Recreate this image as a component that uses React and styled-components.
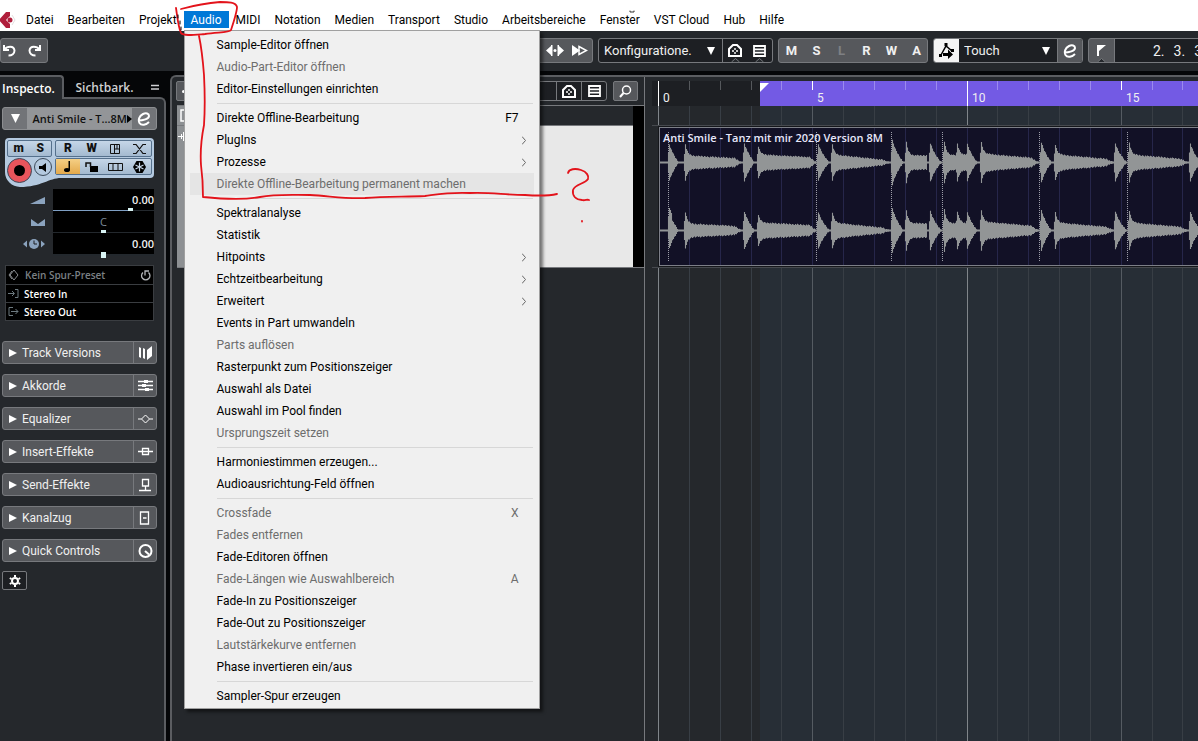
import { useLayoutEffect, useRef, useState } from "react";
import styled, { createGlobalStyle, css } from "styled-components";

const GlobalStyle = createGlobalStyle`
  * {
    box-sizing: border-box;
  }
  html, body, #root {
    height: 100%;
  }
  body {
    margin: 0;
    background: #25282c;
    overflow: hidden;
    font-family: Roboto, "Open Sans", sans-serif;
    font-size: 12px;
  }
  button, input, select {
    font: inherit;
    color: inherit;
    margin: 0;
    padding: 0;
    border: 0;
    background: none;
  }
  ul {
    list-style: none;
    margin: 0;
    padding: 0;
  }
`;

const line = "#77797d";

const strong = css`
  font-family: "Open Sans", sans-serif;
  font-weight: 600;
`;

const App = () => (
  <>
    <GlobalStyle />
    <Page>
      <MenuBar />
      <Toolbar />
      <Workspace>
        <Inspector />
        <Project>
          <TrackList />
          <Timeline />
        </Project>
      </Workspace>
      <Marker />
    </Page>
  </>
);

const Page = styled.div`
  position: relative;
  display: flex;
  flex-direction: column;
  min-height: 100%;
  overflow: hidden;
`;

const Workspace = styled.main`
  flex: 1;
  display: flex;
  align-items: stretch;
  background: #050608;
  padding-top: 4px;
`;

/* ---------- menu bar ---------- */

const Bar = styled.nav`
  display: flex;
  align-items: center;
  height: 31px;
  padding-top: 8px;
  background: #fff;
  color: #000;
  ul {
    display: flex;
  }
`;

const Logo = styled.svg`
  width: 19px;
  height: 18px;
  flex: none;
`;

const MenuEntry = styled.li`
  position: relative;
  z-index: 5;
`;

const MenuButton = styled.button`
  display: block;
  height: 17px;
  padding: 2px 7px 0;
  line-height: 15px;
  white-space: nowrap;
  background: ${(p) => (p.$open ? "#0078d7" : "none")};
  color: ${(p) => (p.$open ? "#fff" : "#000")};
`;

const Dropdown = styled.ul`
  position: absolute;
  top: 19px;
  left: 0;
  width: 356px;
  flex-direction: column;
  padding: 3px 5px 1px;
  background: #f0f0f0;
  border: 1px solid #a0a0a0;
  box-shadow: 3px 3px 3px rgba(0, 0, 0, 0.5);
`;

const DropItem = styled.button`
  display: flex;
  align-items: center;
  width: 100%;
  height: 22px;
  padding: 0 8px 0 27px;
  text-align: left;
  color: ${(p) => (p.disabled ? "#6d6d6d" : "#000")};
  background: ${(p) => (p.$hot ? "#e5e5e5" : "none")};
  span {
    flex: 1;
    white-space: nowrap;
  }
  kbd {
    font: inherit;
    margin-right: 7px;
  }
`;

const Separator = styled.li`
  height: 1px;
  margin: 3px 1px 3px 27px;
  background: #d7d7d7;
`;

const menuNames = [
  "Datei",
  "Bearbeiten",
  "Projekt",
  "Audio",
  "MIDI",
  "Notation",
  "Medien",
  "Transport",
  "Studio",
  "Arbeitsbereiche",
  "Fenster",
  "VST Cloud",
  "Hub",
  "Hilfe",
];

const audioMenu = [
  { label: "Sample-Editor öffnen" },
  { label: "Audio-Part-Editor öffnen", off: true },
  { label: "Editor-Einstellungen einrichten" },
  null,
  { label: "Direkte Offline-Bearbeitung", keys: "F7" },
  { label: "PlugIns", sub: true },
  { label: "Prozesse", sub: true },
  { label: "Direkte Offline-Bearbeitung permanent machen", off: true, hot: true },
  null,
  { label: "Spektralanalyse" },
  { label: "Statistik" },
  { label: "Hitpoints", sub: true },
  { label: "Echtzeitbearbeitung", sub: true },
  { label: "Erweitert", sub: true },
  { label: "Events in Part umwandeln" },
  { label: "Parts auflösen", off: true },
  { label: "Rasterpunkt zum Positionszeiger" },
  { label: "Auswahl als Datei" },
  { label: "Auswahl im Pool finden" },
  { label: "Ursprungszeit setzen", off: true },
  null,
  { label: "Harmoniestimmen erzeugen..." },
  { label: "Audioausrichtung-Feld öffnen" },
  null,
  { label: "Crossfade", off: true, keys: "X" },
  { label: "Fades entfernen", off: true },
  { label: "Fade-Editoren öffnen" },
  { label: "Fade-Längen wie Auswahlbereich", off: true, keys: "A" },
  { label: "Fade-In zu Positionszeiger" },
  { label: "Fade-Out zu Positionszeiger" },
  { label: "Lautstärkekurve entfernen", off: true },
  { label: "Phase invertieren ein/aus" },
  null,
  { label: "Sampler-Spur erzeugen" },
];

const MenuBar = () => {
  const [open, setOpen] = useState("Audio");
  return (
    <Bar>
      <Logo viewBox="0 0 19 18">
        <path d="M-1 9 L6 1 L10 1 L10 5 L6 9 L10 13 L10 17 L6 17 Z" fill="#b01f3c" />
        <circle cx="10" cy="9" r="2.5" fill="#b01f3c" />
        <path d="M12 4 L15 9 L12 14" fill="none" stroke="#e3dfe0" />
      </Logo>
      <ul>
        {menuNames.map((name) => (
          <MenuEntry key={name}>
            <MenuButton
              $open={open === name}
              onClick={() => setOpen(open === name ? null : name)}
            >
              {name}
            </MenuButton>
            {name === "Audio" && open === name && (
              <Dropdown>
                {audioMenu.map((item, i) =>
                  item ? (
                    <li key={i}>
                      <DropItem disabled={item.off} $hot={item.hot}>
                        <span>{item.label}</span>
                        {item.keys && <kbd>{item.keys}</kbd>}
                        {item.sub && (
                          <svg width="4" height="9" viewBox="0 0 4 9">
                            <path d="M0 0.5 L3.5 4.5 L0 8.5" fill="none" stroke="#666" />
                          </svg>
                        )}
                      </DropItem>
                    </li>
                  ) : (
                    <Separator key={i} />
                  ),
                )}
              </Dropdown>
            )}
          </MenuEntry>
        ))}
      </ul>
    </Bar>
  );
};

/* ---------- toolbar ---------- */

const Tools = styled.header`
  display: flex;
  align-items: flex-start;
  gap: 5px;
  height: 40px;
  padding-top: 7px;
  background: #25282c;
  color: #f0f0f0;
  overflow: hidden;
`;

const Spacer = styled.div`
  flex: 0 0 ${(p) => p.$width}px;
`;

const Group = styled.div`
  display: flex;
  flex: 0 0 ${(p) => p.$width}px;
  justify-content: ${(p) => (p.$end ? "flex-end" : "flex-start")};
  height: ${(p) => p.$height || 25}px;
  border: 1px solid ${line};
  border-radius: 3px;
  background: ${(p) => (p.$dark ? "#1d1f23" : "#56585c")};
  overflow: hidden;
`;

const tones = {
  plain: css``,
  divided: css`
    border-left: 1px solid ${line};
  `,
  grey: css`
    background: #56585c;
    border-left: 1px solid ${line};
  `,
  light: css`
    background: #f4f4f4;
    color: #000;
  `,
};

const ToolButton = styled.button`
  display: flex;
  align-items: center;
  justify-content: center;
  flex: 0 0 25px;
  position: relative;
  font-size: 13px;
  font-weight: 700;
  color: ${(p) => (p.disabled ? "#7e8084" : "#f0f0f0")};
  ${(p) => tones[p.$tone || "plain"]}
`;

const Picker = styled.label`
  display: flex;
  align-items: center;
  flex: 1;
  padding: 0 7px 0 5px;
  select {
    flex: 1;
    min-width: 0;
    appearance: none;
    font-size: 13px;
    outline: none;
  }
  option {
    color: #000;
  }
`;

const Position = styled.output`
  display: flex;
  align-items: center;
  flex: 1;
  gap: 9px;
  padding-left: 38px;
  border-left: 1px solid ${line};
  background: #1d1f23;
  font-size: 14px;
  white-space: nowrap;
`;

const Down = ({ size = 8 }) => (
  <svg width={size} height={size} viewBox="0 0 8 8" fill="#fff">
    <path d="M0 0 H8 L4 8 Z" />
  </svg>
);

const Notch = styled.svg`
  position: absolute;
  left: 8px;
  bottom: 0;
`;

const House = () => (
  <svg width="14" height="13" viewBox="0 0 14 13">
    <path d="M1 12 V5 L5 1 H9 L13 5 V12 Z" fill="none" stroke="#fff" strokeWidth="2" />
    <path d="M7 4 V6 M7 8 V10 M4 7 H6 M8 7 H10" stroke="#fff" strokeWidth="1.4" />
  </svg>
);

const Rack = () => (
  <svg width="13" height="12" viewBox="0 0 13 12" fill="none" stroke="#fff" strokeWidth="1.8">
    <path d="M1 1 H12 V11 H1 Z M1 4.3 H12 M1 7.6 H12" />
  </svg>
);

const Edit = ({ size = 14 }) => (
  <svg width={size} height={size} viewBox="0 0 14 14" fill="none" stroke="#fff" strokeWidth="2">
    <path d="M1 8.5 C6 8.5 12 7 12 4 C12 1.5 9 0.5 6 2 C2 4 1 8 2.5 11 C4.5 14 9 13 12 10" />
  </svg>
);

const NotchMark = () => (
  <Notch width="9" height="4" viewBox="0 0 9 4">
    <path d="M0.5 4 L4.5 0.5 L8.5 4" fill="#25282c" stroke={line} />
  </Notch>
);

const Toolbar = () => (
  <Tools>
    <Group $width={48} $end>
      <ToolButton aria-label="Rückgängig">
        <svg width="15" height="13" viewBox="0 0 15 13" fill="none" stroke="#fff" strokeWidth="2">
          <path d="M2 1 V6 H7" />
          <path d="M2.5 5.5 C5 2 12 1 12.5 6.5 C12.5 9.5 10 11.5 6.5 11.5" />
        </svg>
      </ToolButton>
      <ToolButton aria-label="Wiederherstellen">
        <svg width="15" height="13" viewBox="0 0 15 13" fill="none" stroke="#fff" strokeWidth="2">
          <path d="M13 1 V6 H8" />
          <path d="M12.5 5.5 C10 2 3 1 2.5 6.5 C2.5 9.5 5 11.5 8.5 11.5" />
        </svg>
      </ToolButton>
    </Group>
    <Spacer $width={433} />
    <Group $width={102} $end>
      <ToolButton aria-label="Zentrieren">
        <svg width="18" height="11" viewBox="0 0 18 11" fill="#fff">
          <path d="M0 5.5 L5 1 V10 Z M18 5.5 L13 1 V10 Z M5 0 H6.5 V11 H5 Z M11.5 0 H13 V11 H11.5 Z" />
          <circle cx="9" cy="5.5" r="1.5" />
        </svg>
      </ToolButton>
      <ToolButton aria-label="Vorwärts">
        <svg width="16" height="11" viewBox="0 0 16 11" fill="#fff">
          <path d="M0 0 L8 5.5 L0 11 Z" />
          <path d="M7 1.5 L14.5 5.5 L7 9.5 Z" fill="none" stroke="#fff" strokeWidth="1.5" />
        </svg>
      </ToolButton>
    </Group>
    <Group $width={175} $dark>
      <Picker>
        <select aria-label="Konfiguration">
          <option>Konfiguratione.</option>
        </select>
        <Down />
      </Picker>
      <ToolButton $tone="divided" aria-label="Zonen">
        <House />
        <NotchMark />
      </ToolButton>
      <ToolButton aria-label="Fensterlayout">
        <Rack />
        <NotchMark />
      </ToolButton>
    </Group>
    <Group $width={150}>
      {["M", "S", "L", "R", "W", "A"].map((t) => (
        <ToolButton key={t} disabled={t === "L"}>
          {t}
        </ToolButton>
      ))}
    </Group>
    <Group $width={150} $dark>
      <ToolButton $tone="light" aria-label="Automation">
        <svg width="16" height="16" viewBox="0 0 16 16">
          <path d="M2 12 L7 3 L13 8" fill="none" stroke="#000" strokeWidth="1.5" />
          <rect x="5.5" y="0" width="3" height="3" />
          <rect x="0" y="11" width="3" height="3" />
          <rect x="12" y="6" width="3" height="3" />
          <path d="M4 10 H9 V6.5 L14 11.5 L9 16 V13 H4 Z" />
        </svg>
      </ToolButton>
      <Picker>
        <select aria-label="Automationsmodus">
          <option>Touch</option>
        </select>
        <Down />
      </Picker>
      <ToolButton $tone="grey" aria-label="Automationsfeld">
        <Edit />
      </ToolButton>
    </Group>
    <Group $width={400}>
      <ToolButton aria-label="Locator">
        <svg width="9" height="11" viewBox="0 0 9 11" fill="#fff">
          <path d="M0 0 H9 L2 6 V11 H0 Z" />
        </svg>
        <NotchMark />
      </ToolButton>
      <Position>
        <span>2.</span>
        <span>3.</span>
        <span>3</span>
      </Position>
    </Group>
  </Tools>
);

/* ---------- inspector ---------- */

const edge = "#5b5d61";

const Side = styled.aside`
  display: flex;
  flex-direction: column;
  flex: 0 0 170px;
  padding-right: 4px;
  color: #f0f0f0;
`;

const Tabs = styled.div`
  display: flex;
  height: 24px;
  margin-bottom: -2px;
`;

const Tab = styled.button`
  position: relative;
  flex: 0 0 ${(p) => (p.$active ? 64 : 79)}px;
  text-align: ${(p) => (p.$active ? "left" : "center")};
  padding-left: 2px;
  white-space: nowrap;
  color: ${(p) => (p.$active ? "#fff" : "#cfd0d2")};
  ${strong}
  ${(p) =>
    p.$active &&
    css`
      background: #25282c;
      border-top: 2px solid ${edge};
      border-right: 2px solid ${edge};
      border-top-right-radius: 4px;
    `}
`;

const Panel = styled.div`
  flex: 1;
  padding: 8px 7px 0 2px;
  background: #25282c;
  border-top: 2px solid ${edge};
  border-right: 2px solid ${edge};
  border-top-right-radius: 6px;
`;

const TrackHead = styled.div`
  display: flex;
  height: 23px;
  border: 1px solid #8b8d90;
  border-radius: 3px;
  background: #939598;
  color: #111;
  overflow: hidden;
`;

const TrackName = styled.div`
  flex: 1;
  display: flex;
  align-items: center;
  justify-content: flex-end;
  font-size: 11px;
  white-space: nowrap;
  ${strong}
`;

const HeadButton = styled.button`
  display: flex;
  flex: 0 0 24px;
  align-items: center;
  justify-content: center;
  background: #727478;
`;

const Controls = styled.div`
  position: relative;
  display: grid;
  grid-template-columns: 45px 97px;
  grid-auto-rows: 17px;
  gap: 1px 3px;
  height: 50px;
  margin: 8px 0 0 3px;
  padding: 2px;
  color: #111;
`;

const ControlsShape = styled.svg`
  position: absolute;
  top: 0;
  left: 0;
`;

const Cells = styled.div`
  position: relative;
  display: grid;
  grid-template-columns: repeat(${(p) => p.$count}, 1fr);
  border: 1px solid #55708c;
  border-radius: 2px;
  background: linear-gradient(#c5d6e8, #a4bad0);
`;

const Cell = styled.button`
  display: flex;
  align-items: center;
  justify-content: center;
  font-size: 12px;
  font-weight: 900;
  line-height: 15px;
  background: ${(p) => (p.$lit ? "linear-gradient(#f5cf85, #e3a94b)" : "none")};
  & + & {
    border-left: ${(p) => (p.$rule ? "1px solid #55708c" : "0")};
  }
`;

const RoundPair = styled.div`
  position: relative;
  display: flex;
  align-items: flex-start;
  gap: 2px;
`;

const Round = styled.button`
  display: flex;
  align-items: center;
  justify-content: center;
  flex: none;
  width: ${(p) => p.$size}px;
  height: ${(p) => p.$size}px;
  border: 1px solid #3c4a5a;
  border-radius: 50%;
  background: ${(p) => p.$fill};
`;

const Faders = styled.div`
  display: grid;
  grid-template-columns: 1fr 101px;
  margin: 1px 3px 0 0;
`;

const FaderIcon = styled.div`
  display: flex;
  align-items: center;
  justify-content: flex-end;
  padding-right: 8px;
  height: 22px;
`;

const Fader = styled.label`
  display: flex;
  flex-direction: column;
  height: 22px;
  padding-top: 3px;
  background: #000;
  font-size: 11px;
  line-height: 16px;
  text-align: right;
  ${strong}
  span {
    height: 16px;
    ${(p) =>
      p.$center &&
      css`
        text-align: center;
        font-weight: 400;
        color: #7c8a99;
      `}
  }
  input {
    appearance: none;
    width: 100%;
    height: 6px;
    background: linear-gradient(#7f9fc4, #7f9fc4) 0 50% / ${(p) => p.$fill}% 2px no-repeat,
      linear-gradient(#23282d, #23282d) 0 50% / 100% 2px no-repeat;
  }
  input::-webkit-slider-thumb {
    appearance: none;
    width: 5px;
    height: 6px;
    background: #d8f3f3;
  }
`;

const Routing = styled.ul`
  margin: 10px 3px 0 3px;
  border: 1px solid #3a3d41;
  background: #000;
`;

const Route = styled.li`
  display: flex;
  align-items: center;
  gap: 5px;
  height: 18px;
  padding: 0 2px;
  font-size: 10px;
  color: ${(p) => (p.$dim ? "#7b8085" : "#fff")};
  ${strong}
  & + & {
    border-top: 1px solid #3a3d41;
  }
  span {
    flex: 1;
  }
`;

const Sections = styled.div`
  display: flex;
  flex-direction: column;
  gap: 10px;
  margin-top: 20px;
`;

const Section = styled.button`
  display: flex;
  align-items: center;
  height: 23px;
  padding-left: 6px;
  gap: 5px;
  border: 1px solid ${line};
  border-radius: 3px;
  background: #56585c;
  color: #f0f0f0;
  text-align: left;
  span {
    flex: 1;
    white-space: nowrap;
  }
`;

const SectionIcon = styled.i`
  display: flex;
  align-items: center;
  justify-content: center;
  width: 23px;
  height: 21px;
  border-left: 1px solid ${line};
`;

const SetupButton = styled.button`
  display: flex;
  align-items: center;
  justify-content: center;
  width: 25px;
  height: 19px;
  margin-top: 9px;
  border: 1px solid ${line};
  border-radius: 2px;
  background: #1d1f23;
`;

const sections = [
  {
    name: "Track Versions",
    icon: <path d="M1 1 L3 2 V12 L1 11 Z M5 2 L7 3 V13 L5 12 Z M9 4 L14 0 V10 L9 14 Z" fill="#fff" />,
  },
  {
    name: "Akkorde",
    icon: (
      <g stroke="#fff" strokeWidth="1.5" fill="#fff">
        <path d="M0 2.5 H15 M0 6.5 H15 M0 10.5 H15" />
        <path d="M6 2.5 H10 M4 6.5 H8 M7 10.5 H11" strokeWidth="3" />
      </g>
    ),
  },
  {
    name: "Equalizer",
    icon: <path d="M0 7 H3.5 M11.5 7 H15 M7.5 3 L11.5 7 L7.5 11 L3.5 7 Z" fill="none" stroke="#fff" />,
  },
  {
    name: "Insert-Effekte",
    icon: <path d="M0 6.5 H15 M4.5 3.5 H10.5 V9.5 H4.5 Z" fill="none" stroke="#fff" strokeWidth="1.3" />,
  },
  {
    name: "Send-Effekte",
    icon: <path d="M4.5 1.5 H10.5 V8 H4.5 Z M7.5 8 V12 M1 12.5 H13" fill="none" stroke="#fff" strokeWidth="1.3" />,
  },
  {
    name: "Kanalzug",
    icon: <path d="M2.5 1 H10.5 V13 H2.5 Z M5 7 H8.5" fill="none" stroke="#fff" strokeWidth="1.3" />,
  },
  {
    name: "Quick Controls",
    icon: (
      <g fill="none" stroke="#fff" strokeWidth="2">
        <circle cx="7.5" cy="7" r="6" />
        <path d="M7 7 L11 10.5" />
      </g>
    ),
  },
];

const Inspector = () => (
  <Side>
    <Tabs>
      <Tab $active>Inspecto.</Tab>
      <Tab>Sichtbark.</Tab>
      <svg width="23" height="24" viewBox="0 0 23 24" stroke="#cfd0d2" strokeWidth="1.5">
        <path d="M8 10.5 H16 M8 14 H16" />
      </svg>
    </Tabs>
    <Panel>
      <TrackHead>
        <HeadButton aria-label="Spurliste">
          <Down size={9} />
        </HeadButton>
        <TrackName>
          Anti Smile - T...8M
          <svg width="5" height="8" viewBox="0 0 5 8">
            <path d="M0 0 L5 4 L0 8 Z" />
          </svg>
        </TrackName>
        <HeadButton aria-label="Kanal bearbeiten">
          <Edit />
        </HeadButton>
      </TrackHead>
      <Controls>
        <ControlsShape width="149" height="50" viewBox="0 0 149 50">
          <path
            d="M4 0 H145 Q149 0 149 4 V36 Q149 40 145 40 H56 C44 40 36 49 15 49 A15 15 0 0 1 0 34 V4 Q0 0 4 0 Z"
            fill="#b4c9df"
          />
        </ControlsShape>
        <Cells $count={2}>
          <Cell $rule>m</Cell>
          <Cell $rule>S</Cell>
        </Cells>
        <Cells $count={4}>
          <Cell>R</Cell>
          <Cell>W</Cell>
          <Cell aria-label="Spuren">
            <svg width="10" height="10" viewBox="0 0 10 10" fill="none" stroke="#111">
              <path d="M0.5 0.5 H9.5 V9.5 H0.5 Z M4.5 0.5 V9.5 M4.5 5 H9.5 M7 0.5 V5" />
            </svg>
          </Cell>
          <Cell aria-label="Crossfade">
            <svg width="13" height="10" viewBox="0 0 13 10" fill="none" stroke="#111" strokeWidth="1.2">
              <path d="M0 0.5 H3 L10 9.5 H13 M0 9.5 H3 L10 0.5 H13" />
            </svg>
          </Cell>
        </Cells>
        <RoundPair>
          <Round $size={25} $fill="#e8555c" aria-label="Aufnahme">
            <svg width="11" height="11">
              <circle cx="5.5" cy="5.5" r="5.5" />
            </svg>
          </Round>
          <Round $size={18} $fill="#b4c9df" aria-label="Monitor">
            <svg width="8" height="9" viewBox="0 0 8 9">
              <path d="M0 3 H3 L7 0 V9 L3 6 H0 Z" />
            </svg>
          </Round>
        </RoundPair>
        <Cells $count={4}>
          <Cell $lit aria-label="Musikalische Zeitbasis">
            <svg width="8" height="11" viewBox="0 0 8 11">
              <ellipse cx="3" cy="9" rx="3" ry="2" />
              <path d="M4.5 0 H6 V9 H4.5 Z" />
            </svg>
          </Cell>
          <Cell aria-label="Sperren">
            <svg width="13" height="10" viewBox="0 0 13 10">
              <path d="M5 4 H13 V10 H5 Z" />
              <path d="M1 5 V1 H5.5 V5" fill="none" stroke="#111" strokeWidth="1.5" />
            </svg>
          </Cell>
          <Cell aria-label="Lanes">
            <svg width="15" height="8" viewBox="0 0 15 8" fill="none" stroke="#111">
              <path d="M0.5 0.5 H14.5 V7.5 H0.5 Z M5 0.5 V7.5 M10 0.5 V7.5" />
            </svg>
          </Cell>
          <Cell aria-label="Einfrieren">
            <svg width="13" height="12" viewBox="0 0 13 12">
              <path d="M3.5 0 H9.5 L13 6 L9.5 12 H3.5 L0 6 Z" />
              <path d="M6.5 1.5 V10.5 M2.5 4 L10.5 8 M10.5 4 L2.5 8" stroke="#c5d6e8" strokeWidth="1.2" />
            </svg>
          </Cell>
        </Cells>
      </Controls>
      <Faders>
        <FaderIcon>
          <svg width="15" height="7" viewBox="0 0 15 7">
            <path d="M0 7 L15 0 V7 Z" fill="#8ba3be" />
          </svg>
        </FaderIcon>
        <Fader $fill={76}>
          <span>0.00</span>
          <input type="range" aria-label="Lautstärke" defaultValue="78" />
        </Fader>
        <FaderIcon>
          <svg width="14" height="7" viewBox="0 0 14 7">
            <path d="M0 0 L7 5 L14 0 V7 H0 Z" fill="#8ba3be" />
          </svg>
        </FaderIcon>
        <Fader $fill={0} $center>
          <span>C</span>
          <input type="range" aria-label="Panorama" defaultValue="50" />
        </Fader>
        <FaderIcon>
          <svg width="22" height="10" viewBox="0 0 22 10">
            <path d="M0 5 L4 1.5 V8.5 Z M22 5 L18 1.5 V8.5 Z" fill="#8ba3be" />
            <circle cx="11" cy="5" r="5" fill="#8ba3be" />
            <path d="M11 1.5 V5 H14" fill="none" stroke="#1d1f23" />
          </svg>
        </FaderIcon>
        <Fader $fill={0}>
          <span>0.00</span>
          <input type="range" aria-label="Verzögerung" defaultValue="50" />
        </Fader>
      </Faders>
      <Routing>
        <Route $dim>
          <svg width="12" height="12" viewBox="0 0 12 12" fill="none" stroke="#8a8d91">
            <path d="M6 1 L10 6 L6 11 L2 6 Z M4 2 L1 6 L4 10" />
          </svg>
          <span>Kein Spur-Preset</span>
          <svg width="11" height="12" viewBox="0 0 11 12" fill="none" stroke="#b5b7ba" strokeWidth="1.3">
            <path d="M8.5 3.5 A4.2 4.2 0 1 1 3 3.5 M5 6.5 V2 H9" />
          </svg>
        </Route>
        <Route>
          <svg width="11" height="9" viewBox="0 0 11 9" fill="none" stroke="#6d7a80">
            <path d="M0 4.5 H6 M4 2 L6.5 4.5 L4 7 M7 0.5 H10 V8.5 H7" />
          </svg>
          <span>Stereo In</span>
        </Route>
        <Route>
          <svg width="11" height="9" viewBox="0 0 11 9" fill="none" stroke="#6d7a80">
            <path d="M3 4.5 H10 M7.5 2 L10 4.5 L7.5 7 M5 0.5 H1 V8.5 H5" />
          </svg>
          <span>Stereo Out</span>
        </Route>
      </Routing>
      <Sections>
        {sections.map((s) => (
          <Section key={s.name}>
            <svg width="8" height="8" viewBox="0 0 8 8">
              <path d="M0 0 L8 4 L0 8 Z" fill="#fff" />
            </svg>
            <span>{s.name}</span>
            <SectionIcon>
              <svg width="15" height="14" viewBox="0 0 15 14">
                {s.icon}
              </svg>
            </SectionIcon>
          </Section>
        ))}
      </Sections>
      <SetupButton aria-label="Einrichten">
        <svg width="12" height="12" viewBox="0 0 12 12" fill="none" stroke="#fff">
          <circle cx="6" cy="6" r="3" strokeWidth="2" />
          <path d="M6 0 V2 M6 10 V12 M0.8 3 L2.5 4 M9.5 8 L11.2 9 M0.8 9 L2.5 8 M9.5 4 L11.2 3" strokeWidth="2" />
        </svg>
      </SetupButton>
    </Panel>
  </Side>
);

/* ---------- track list ---------- */

const Project = styled.section`
  flex: 1;
  display: flex;
  min-width: 0;
  background: #25282c;
  border-top: 2px solid ${edge};
  border-left: 2px solid ${edge};
  border-top-left-radius: 6px;
  overflow: hidden;
`;

const Tracks = styled.div`
  flex: 0 0 473px;
  border-right: 1px solid ${line};
`;

const TracksHead = styled.div`
  display: flex;
  gap: 6px;
  padding: 4px 6px 4px 4px;
  color: #fff;
`;

const SquareButton = styled(ToolButton)`
  height: 20px;
  border: 1px solid ${line};
  border-radius: 2px;
  background: #56585c;
`;

const TrackArea = styled.div`
  display: grid;
  grid-template-columns: 1fr 11px;
  grid-template-rows: 20px 141px;
  margin-left: 5px;
  border: solid ${line};
  border-width: 1px 0;
`;

const TopLane = styled.div`
  display: flex;
  border-bottom: 1px solid ${line};
  background: linear-gradient(90deg, #8d9093 8px, #25282c 8px);
`;

const TrackRow = styled.div`
  grid-row: 2;
  background: linear-gradient(90deg, #8d9093 8px, #e8e8e8 8px);
`;

const Meter = styled.div`
  grid-row: 1 / 3;
  grid-column: 2;
  background: #000;
`;

const TrackList = () => (
  <Tracks>
    <TracksHead>
      <SquareButton aria-label="Spur hinzufügen">
        <svg width="13" height="3" viewBox="0 0 13 3" fill="#fff">
          <circle cx="1.5" cy="1.5" r="1.5" />
          <circle cx="6.5" cy="1.5" r="1.5" />
          <circle cx="11.5" cy="1.5" r="1.5" />
        </svg>
      </SquareButton>
      <Group $width={400} $height={20} $end $dark>
        <ToolButton $tone="divided" aria-label="Sichtbarkeit">
          <House />
        </ToolButton>
        <ToolButton $tone="divided" aria-label="Spuransicht">
          <Rack />
        </ToolButton>
      </Group>
      <SquareButton aria-label="Suchen">
        <svg width="13" height="13" viewBox="0 0 13 13" fill="none" stroke="#fff">
          <circle cx="7.5" cy="5" r="4" strokeWidth="1.5" />
          <path d="M4.5 8 L1 12" strokeWidth="2" />
        </svg>
      </SquareButton>
    </TracksHead>
    <TrackArea>
      <TopLane>
        <svg width="8" height="16" viewBox="0 0 8 16" fill="none" stroke="#fff" strokeWidth="1.5">
          <path d="M8 4 H4 V15 H8" />
        </svg>
      </TopLane>
      <TrackRow>
        <svg width="8" height="18" viewBox="0 0 8 18" stroke="#fff">
          <path d="M1 10.5 H8 M4.5 8 V13 M6.5 6 V15" />
        </svg>
      </TrackRow>
      <Meter />
    </TrackArea>
  </Tracks>
);

/* ---------- timeline ---------- */

const BAR = 30.85;
const ORIGIN = 6;
const barX = (n) => Math.round(ORIGIN + n * BAR) + 0.5;

const Stage = styled.div`
  position: relative;
  flex: 1;
  display: flex;
  flex-direction: column;
  min-width: 0;
  margin: 4px 0 0 7px;
  overflow: hidden;
`;

const Ruler = styled.div`
  position: relative;
  height: 25px;
  background: #1d1f23;
  overflow: hidden;
  color: #f0f0f0;
`;

const Cycle = styled.div`
  position: absolute;
  inset: 0 0 0 108px;
  background: #735ae4;
`;

const Ticks = styled.svg`
  position: absolute;
  inset: 0;
  width: 100%;
  height: 100%;
`;

const BarNumber = styled.span`
  position: absolute;
  top: 10px;
  line-height: 15px;
`;

const Arrange = styled.div`
  position: relative;
  flex: 1;
  padding: 21px 0 0 7px;
  background: linear-gradient(90deg, #25282c 108px, #272e36 108px);
`;

const Clip = styled.div`
  position: relative;
  height: 139px;
  border: 1px solid #7d7f88;
  border-right: 0;
  outline: 1px solid #15171b;
  background: #121126;
  overflow: hidden;
`;

const ClipName = styled.div`
  position: relative;
  padding: 2px 3px;
  font-size: 11px;
  line-height: 16px;
  color: #e8e8fb;
  white-space: nowrap;
  ${strong}
`;

// [start, peak, body, tail, end] in pixels from the clip's left edge
const hits = [
  [8, 18, 9, 1, 18],
  [24, 18, 7, 4, 81],
  [83, 19, 9, 1, 94],
  [97, 16, 8, 5, 156],
  [157, 18, 8, 1, 169],
  [171, 18, 8, 2, 229],
  [231, 22, 9, 1, 243],
  [245, 20, 7, 7, 267],
  [269, 19, 8, 1, 281],
  [283, 21, 8, 7, 296],
  [296, 19, 9, 7, 306],
  [306, 18, 8, 1, 317],
  [320, 20, 9, 4, 378],
  [380, 20, 10, 1, 391],
  [394, 18, 8, 3, 453],
  [454, 19, 9, 1, 466],
  [468, 20, 8, 3, 527],
  [529, 19, 9, 1, 540],
  [543, 18, 8, 4, 602],
  [604, 18, 9, 1, 615],
  [618, 16, 8, 4, 677],
  [679, 18, 9, 1, 690],
  [693, 17, 8, 4, 752],
];

const cuts = [8, 156, 231, 282, 379, 467, 604, 690];

const wave = (center, seed) => {
  let d = "";
  hits.forEach(([start, peak, body, tail, end], h) => {
    const short = tail === 1;
    for (let x = start; x < end; x++) {
      const into = x - start;
      const t = into / (end - start);
      const noise = ((x * 7919 + seed * 104729) % 97) / 97;
      let a = body + (tail - body) * t;
      if (short) a = peak * 0.75 * (1 - t);
      if (into === 0) a = peak * 0.5;
      else if (into === 1) a = peak;
      else a += (peak - a) * Math.exp(-(into - 1) / 2);
      if (end - x < 7 && !short && tail < 7) a *= (end - x) / 7;
      a = Math.max(1, a + noise * 1.4 - 0.6);
      const up = seed === 2 && h === 0 && into < 4 ? a + 5 : a;
      d += `M${x + 0.5} ${(center - up).toFixed(1)}V${(center + a).toFixed(1)}`;
    }
  });
  return d;
};

const upper = wave(34.5, 1);
const lower = wave(102.5, 2);

const tickColor = (n) => {
  if (n % 5 === 0) return "#fff";
  return n * BAR > 102 ? "#9c8aee" : "#55585c";
};

const gridColor = (n) => {
  if (n % 10 === 0) return "#80858a";
  return n % 5 === 0 ? "#555b62" : "#383e45";
};

const Timeline = () => {
  const stage = useRef(null);
  const [width, setWidth] = useState(540);
  useLayoutEffect(() => {
    const measure = () => setWidth(stage.current.clientWidth);
    measure();
    window.addEventListener("resize", measure);
    return () => window.removeEventListener("resize", measure);
  }, []);
  const bars = Array.from({ length: Math.ceil((width - ORIGIN) / BAR) }, (_, n) => n);
  return (
    <Stage ref={stage}>
      <Ruler>
        <Cycle>
          <svg width="9" height="9" viewBox="0 0 9 9">
            <path d="M0 0 H9 L0 9 Z" fill="#fff" />
          </svg>
        </Cycle>
        <Ticks>
          {bars.map((n) => (
            <line key={n} x1={barX(n)} x2={barX(n)} y1="0" y2={n % 10 ? 9 : 25} stroke={tickColor(n)} />
          ))}
        </Ticks>
        {bars
          .filter((n) => n % 5 === 0)
          .map((n) => (
            <BarNumber key={n} style={{ left: barX(n) + 4.5 }}>
              {n}
            </BarNumber>
          ))}
      </Ruler>
      <Arrange>
        <Ticks>
          {bars.map((n) => (
            <line key={n} x1={barX(n)} x2={barX(n)} y1="0" y2="100%" stroke={gridColor(n)} />
          ))}
          <path d="M0 19.5 H4000 M0 161.5 H4000" stroke="#46494e" />
        </Ticks>
        <Clip>
          <Ticks>
            {bars.map((n) => (
              <line key={n} x1={barX(n) - 8} x2={barX(n) - 8} y1="0" y2="100%" stroke="#26264a" />
            ))}
            {cuts.map((x) => (
              <line key={x} x1={x + 0.5} x2={x + 0.5} y1="4" y2="134" stroke="#9c9da8" strokeDasharray="1 1" />
            ))}
            <path d="M0 34.5 H752 M0 102.5 H752" stroke="#929596" strokeWidth="2" />
            <path d={upper} stroke="#929596" strokeWidth="1.1" />
            <path d={lower} stroke="#929596" strokeWidth="1.1" />
          </Ticks>
          <ClipName>Anti Smile - Tanz mit mir 2020 Version 8M</ClipName>
        </Clip>
      </Arrange>
    </Stage>
  );
};

/* ---------- red pen marks over the window ---------- */

const Pen = styled.svg`
  position: absolute;
  top: 0;
  left: 0;
  z-index: 10;
  pointer-events: none;
`;

const Marker = () => (
  <Pen width="640" height="240" viewBox="0 0 640 240" fill="none" stroke="#e3131b" strokeWidth="1.8" strokeLinecap="round" strokeLinejoin="round">
    <path d="M176 8 C177 14 178 26 181 33 C184 36 192 35 205 34 C218 32 229 33 231 30 C233 24 237 12 237 7 C236 2 228 2 220 2 C206 3 192 6 181 9" />
    <path d="M199 36 C202 50 203 62 204 75 C205 95 205 110 204 125 C201 140 200 150 201 165 C203 180 203 190 203 197 C222 199 245 200 260 197 C275 194 290 195 310 195 C330 196 345 199 365 198 C385 196 405 197 425 196 C440 194 450 192 470 193 C490 192 505 195 525 195 C540 196 548 196 557 194" />
    <path d="M568 173 C569 169 575 168 581 170 C587 172 589 176 588 179 C585 184 575 184 573 190 C572 196 576 200 582 200 C585 201 587 199 589 200" />
    <path d="M582 221 V221.5" />
    <path d="M178 15 V18 M180 21 V24 M181 27 V30" stroke="#000" strokeWidth="1" />
    <path d="M630 11 V12 H634 V11" stroke="#333" strokeWidth="1" />
  </Pen>
);

export default App;
